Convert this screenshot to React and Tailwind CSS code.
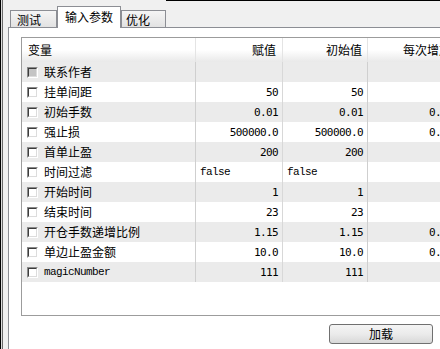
import React from 'react';

const cjk = { fontFamily: '"Noto Sans CJK SC", "Noto Sans", sans-serif' };

// MT4 tester "输入参数" grid data
const rows = [
  { name: '联系作者', value: '', start: '', step: '', disabled: true },
  { name: '挂单间距', value: '50', start: '50', step: '' },
  { name: '初始手数', value: '0.01', start: '0.01', step: '0.01' },
  { name: '强止损', value: '500000.0', start: '500000.0', step: '0.00' },
  { name: '首单止盈', value: '200', start: '200', step: '' },
  { name: '时间过滤', value: 'false', start: 'false', step: '', bool: true },
  { name: '开始时间', value: '1', start: '1', step: '' },
  { name: '结束时间', value: '23', start: '23', step: '' },
  { name: '开仓手数递增比例', value: '1.15', start: '1.15', step: '0.00' },
  { name: '单边止盈金额', value: '10.0', start: '10.0', step: '0.00' },
  { name: 'magicNumber', value: '111', start: '111', step: '', latin: true },
];

const Check = ({ disabled }) => (
  <span className="flex h-[11px] w-[11px] shrink-0 border border-t-[#8a8a8a] border-l-[#8a8a8a] border-r-white border-b-white">
    <span
      className={
        'block h-full w-full border border-t-[#3c3c3c] border-l-[#3c3c3c] border-r-[#dcdcdc] border-b-[#dcdcdc] ' +
        (disabled ? 'bg-[#c4c4c4]' : 'bg-white')
      }
    />
  </span>
);

const Num = ({ children, bool }) =>
  bool ? (
    <span className="text-[11px] tracking-[-0.6px]" style={{ fontFamily: '"Liberation Mono", monospace' }}>
      {children}
    </span>
  ) : (
    <span className="text-[11px] tracking-[-0.6px]" style={{ fontFamily: '"DejaVu Sans Mono", monospace' }}>
      {children}
    </span>
  );

const Tab = ({ label, active, width, pad }) => (
  <div
    className={
      'flex shrink-0 border border-b-0 border-[#8c8e94] text-[12px] leading-none text-black ' +
      (active
        ? 'relative z-10 -mb-px h-[22px] bg-white pt-[4px]'
        : 'h-[17px] bg-gradient-to-b from-[#f5f5f5] to-[#e2e2e2] pt-[3px]')
    }
    style={{ width, paddingLeft: pad }}
  >
    {label}
  </div>
);

export default function App() {
  return (
    <div className="flex h-[349px] w-[440px] overflow-hidden bg-[#f0f0f0] text-black" style={cjk}>
      {/* window edge */}
      <div className="h-full w-[3px] shrink-0 border-l border-r border-l-black border-r-[#6a6a6a] bg-[#dcdcdc]" />
      <div className="w-[5px] shrink-0" />

      <div className="flex w-[470px] shrink-0 flex-col">
        {/* tabs */}
        <div className="flex h-[27px] shrink-0 items-end pl-[2px]">
          <Tab label="测试" width={47} pad={6} />
          <Tab label="输入参数" width={64} pad={7} active />
          <Tab label="优化" width={45} pad={4} />
          <div className="h-full flex-1 border-t border-black" />
        </div>

        {/* panel */}
        <div className="flex flex-1 flex-col border-l border-t border-[#8c8e94] bg-white pl-[12px] pt-[9px]">
          <div className="flex h-[279px] w-[460px] shrink-0 flex-col border border-[#9c9c9c] bg-white">
            {/* header */}
            <div className="flex h-[24px] shrink-0 bg-gradient-to-b from-white via-white to-[#e9e9e9] text-[12px] leading-none">
              <div className="flex w-[174px] shrink-0 items-center border-r border-[#e4e4e4] pl-[6px]">变量</div>
              <div className="flex w-[87px] shrink-0 items-center justify-end border-r border-[#e4e4e4] pr-[6px]">赋值</div>
              <div className="flex w-[85px] shrink-0 items-center justify-end border-r border-[#e4e4e4] pr-[5px]">初始值</div>
              <div className="flex w-[90px] shrink-0 items-center justify-end border-r border-[#e4e4e4] pr-[6px]">每次增加</div>
            </div>

            {rows.map((r, i) => (
              <div
                key={r.name}
                className={'flex h-[20px] shrink-0 text-[12px] leading-none ' + (i % 2 === 0 ? 'bg-[#ebebeb]' : 'bg-white')}
              >
                <div className="flex w-[174px] shrink-0 items-center gap-[6px] border-r border-[#cfcfcf] pl-[5px]">
                  <Check disabled={r.disabled} />
                  {r.latin ? <Num bool>{r.name}</Num> : <span>{r.name}</span>}
                </div>
                <div
                  className={
                    'flex w-[87px] shrink-0 items-center border-r border-[#d8d8d8] ' +
                    (r.bool ? 'pl-[4px]' : 'justify-end pr-[4px]')
                  }
                >
                  <Num bool={r.bool}>{r.value}</Num>
                </div>
                <div
                  className={
                    'flex w-[85px] shrink-0 items-center border-r border-[#cfcfcf] ' +
                    (r.bool ? 'pl-[4px]' : 'justify-end pr-[4px]')
                  }
                >
                  <Num bool={r.bool}>{r.start}</Num>
                </div>
                <div className="flex w-[90px] shrink-0 items-center justify-end border-r border-[#cfcfcf] pr-[4px]">
                  <Num>{r.step}</Num>
                </div>
              </div>
            ))}
          </div>

          <div className="mt-[8px] flex pl-[308px]">
            <button className="flex h-[20px] w-[104px] items-center justify-center rounded-[3px] border border-[#707070] bg-gradient-to-b from-[#f4f4f4] via-[#ebebeb] to-[#d8d8d8] text-[12px] leading-none">
              加载
            </button>
          </div>
        </div>
      </div>
    </div>
  );
}
